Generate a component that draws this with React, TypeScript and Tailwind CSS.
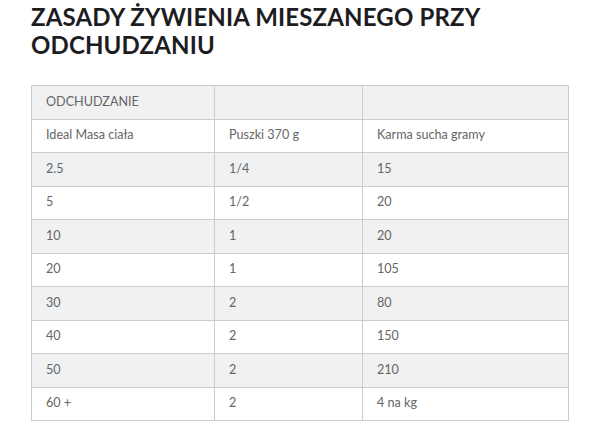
import React from "react";

const rows: [string, string, string][] = [
  ["ODCHUDZANIE", "", ""],
  ["Ideal Masa ciała", "Puszki 370 g", "Karma sucha gramy"],
  ["2.5", "1/4", "15"],
  ["5", "1/2", "20"],
  ["10", "1", "20"],
  ["20", "1", "105"],
  ["30", "2", "80"],
  ["40", "2", "150"],
  ["50", "2", "210"],
  ["60 +", "2", "4 na kg"],
];

export default function App() {
  return (
    <div className="w-[595px] h-[434px] bg-white overflow-hidden" style={{ fontFamily: "Lato, 'Noto Sans', sans-serif" }}>
      <div className="pl-[31px] pt-[3px]">
        <h1 className="text-[24px] leading-[28px] font-bold text-[#1d1d1f] tracking-[0.15px]">
          ZASADY ŻYWIENIA MIESZANEGO PRZY
          <br />
          ODCHUDZANIU
        </h1>
        <table className="mt-[26px] border-collapse w-[537px] table-fixed">
          <colgroup>
            <col className="w-[183px]" />
            <col className="w-[148px]" />
            <col className="w-[206px]" />
          </colgroup>
          <tbody>
            {rows.map((r, i) => (
              <tr key={i} className={i % 2 === 0 ? "bg-[#f0f1f3]" : "bg-white"}>
                {r.map((c, j) => (
                  <td
                    key={j}
                    className="border border-[#cccccc] h-[33.5px] px-[14px] py-0 align-middle text-[12.6px] text-[#666666] leading-none"
                  >
                    {c}
                  </td>
                ))}
              </tr>
            ))}
          </tbody>
        </table>
      </div>
    </div>
  );
}
